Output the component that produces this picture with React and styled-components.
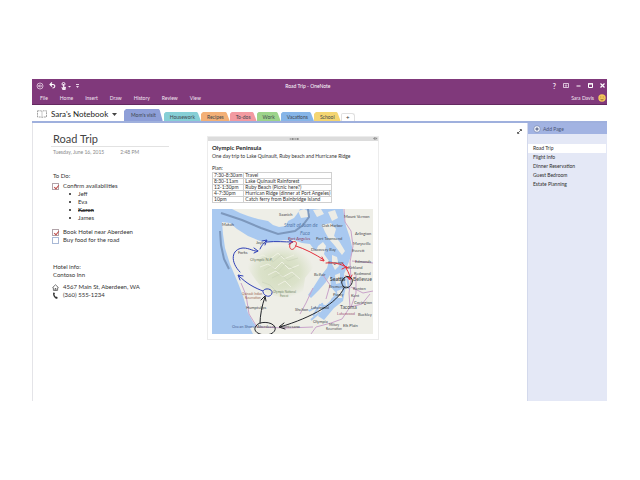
import React, { useState } from 'react';
import styled, { createGlobalStyle } from 'styled-components';

const GlobalStyle = createGlobalStyle`
  * {
    box-sizing: border-box;
  }
  body {
    margin: 0;
    background: #ffffff;
    font-family: Lato, "Open Sans", sans-serif;
    font-size: 6px;
    color: #333;
  }
  button, input {
    font: inherit;
    color: inherit;
    margin: 0;
    padding: 0;
    border: 0;
    background: none;
  }
  h1, h2, p, ul {
    margin: 0;
    padding: 0;
    font-weight: 400;
  }
  svg {
    display: block;
  }
`;

const Page = styled.div`
  display: flex;
  flex-direction: column;
  min-height: 100vh;
  padding: 79px 33px 79px 32px;
`;

const Window = styled.div`
  flex: 1;
  display: flex;
  flex-direction: column;
`;

const Ribbon = styled.header`
  background: #80397b;
  color: #f3e6f2;
  border-bottom: 1px solid #642960;
  font-size: 5px;
`;

const TitleRow = styled.div`
  display: flex;
  align-items: center;
  height: 13px;
  padding: 0 2px 0 4px;
`;

const IconGroup = styled.div`
  display: flex;
  align-items: center;
  gap: ${props => props.gap}px;
`;

const IconButton = styled.button`
  display: flex;
  align-items: center;
  justify-content: center;
  line-height: 8px;
  font-weight: 700;
  font-size: 7px;
`;

const WindowTitle = styled.div`
  flex: 1;
  padding-right: 16px;
  text-align: center;
  color: #ffffff;
`;

const MenuRow = styled.nav`
  display: flex;
  align-items: center;
  gap: 12px;
  height: 12px;
  padding: 0 1px 0 8px;
`;

const User = styled.button`
  display: flex;
  align-items: center;
  gap: 4px;
  margin-left: auto;
`;

const TabRow = styled.div`
  display: flex;
  align-items: flex-end;
  height: 18px;
  padding-left: 5px;
  border-bottom: 2px solid #9fb0dd;
`;

const NotebookButton = styled.button`
  display: flex;
  align-items: center;
  gap: 4px;
  width: 87px;
  height: 14px;
  font-size: 8px;
  color: #222;
`;

const Tab = styled.button`
  height: ${props => (props.$active ? 12 : 9)}px;
  padding: 0 ${props => (props.$active ? 7 : 6)}px;
  margin-right: ${props => (props.$active ? 1 : 0)}px;
  font-size: 5px;
  color: #40474f;
  background: ${props => props.$color};
  clip-path: polygon(0 100%, 0 2px, 2px 0, calc(100% - 4px) 0, calc(100% - 3px) 1px, 100% 100%);
`;

const AddTab = styled.button`
  width: 14px;
  height: 8px;
  font-size: 6px;
  line-height: 7px;
  border: 1px solid #e0e0e0;
  border-bottom: 0;
  border-radius: 2px 3px 0 0;
`;

const Body = styled.div`
  flex: 1;
  display: flex;
`;

const Canvas = styled.main`
  flex: 1;
  display: flex;
  align-items: flex-start;
  border-left: 1px solid #e4e4e8;
  padding-right: 5px;
`;

const Notes = styled.section`
  width: 118px;
  margin: 9px 38px 0 18px;
  line-height: 8px;
`;

const PageTitle = styled.h1`
  padding: 0 2px;
  font-size: 11px;
  line-height: 14px;
  color: #444;
  border-bottom: 1px solid #e2e2e2;
`;

const DateLine = styled.div`
  display: flex;
  gap: 16px;
  padding: 1px 2px 0;
  font-size: 5px;
  color: #8a8a8a;
`;

const Text = styled.p`
  padding-left: 2px;
  margin-top: ${props => props.$top || 0}px;
`;

const TodoItem = styled.label`
  display: flex;
  align-items: center;
  gap: 4px;
  height: 8px;
  padding-left: 1px;
  margin-top: ${props => props.$top || 0}px;
`;

const Checkbox = styled.input`
  appearance: none;
  position: relative;
  width: 7px;
  height: 7px;
  border: 1px solid #a9b9d6;
  background: #ffffff;
  &:checked {
    border-color: #b1a3a9;
  }
  &:checked::after {
    content: "";
    position: absolute;
    left: 2px;
    top: 0;
    width: 2px;
    height: 4px;
    border: solid #c0504d;
    border-width: 0 1px 1px 0;
    transform: rotate(40deg);
  }
`;

const Bullets = styled.ul`
  list-style: none;
  padding-left: 18px;
`;

const Bullet = styled.li`
  display: flex;
  align-items: center;
  gap: 7px;
  font-weight: ${props => (props.$done ? 700 : 400)};
  text-decoration: ${props => (props.$done ? 'line-through' : 'none')};
  &::before {
    content: "";
    width: 2px;
    height: 2px;
    border-radius: 1px;
    background: #222;
  }
`;

const InfoLine = styled.div`
  display: flex;
  align-items: center;
  gap: 4px;
  height: 8px;
  padding-left: 1px;
  margin-top: ${props => props.$top || 0}px;
`;

const Card = styled.section`
  flex: 0 1 172px;
  margin-top: 13px;
  border: 1px solid #ececec;
`;

const CardHandle = styled.div`
  display: flex;
  align-items: center;
  justify-content: center;
  height: 4px;
  background: #dcdcdc;
`;

const CardBody = styled.div`
  padding: 3px 5px 5px 4px;
  font-size: 5px;
  line-height: 8px;
`;

const CardTitle = styled.h2`
  font-size: 6px;
  font-weight: 700;
  color: #1c1c1c;
`;

const Plan = styled.table`
  width: 118px;
  margin-bottom: 6px;
  border-collapse: collapse;
  white-space: nowrap;
  caption {
    padding-top: 5px;
    line-height: 7px;
    text-align: left;
  }
  td {
    height: 6px;
    padding: 0 1px;
    line-height: 5px;
    border: 1px solid #d0d0d0;
  }
  td:first-child {
    width: 29px;
  }
`;

const Expand = styled.button`
  margin: 6px 0 0 auto;
`;

const Sidebar = styled.aside`
  width: 80px;
  background: #e4e8f6;
  border-left: 1px solid #d3d9ec;
`;

const AddPage = styled.button`
  display: flex;
  align-items: center;
  gap: 2px;
  width: 100%;
  height: 11px;
  padding-left: 5px;
  font-size: 5px;
  color: #4b5677;
  background: #a2b3e2;
`;

const PageList = styled.nav`
  display: flex;
  flex-direction: column;
  padding: 10px 1px 0 0;
`;

const PageLink = styled.a`
  height: 9px;
  padding-left: 5px;
  font-size: 5px;
  line-height: 9px;
  color: #2d2d2d;
  text-decoration: none;
  background: ${props => (props.$active ? '#ffffff' : 'none')};
`;

const tabs = [
  { name: "Mom's visit", color: '#8e9fd8' },
  { name: 'Housework', color: '#86cfd6' },
  { name: 'Recipes', color: '#f3b077' },
  { name: 'To-dos', color: '#f39aa1' },
  { name: 'Work', color: '#9dd48b' },
  { name: 'Vacations', color: '#86b5e8' },
  { name: 'School', color: '#f4d572' },
];

const pages = ['Road Trip', 'Flight Info', 'Dinner Reservation', 'Guest Bedroom', 'Estate Planning'];

const plan = [
  ['7:30-8:30am', 'Travel'],
  ['8:30-11am', 'Lake Quinault Rainforest'],
  ['12-1:30pm', 'Ruby Beach (Picnic here?)'],
  ['4-7:30pm', 'Hurrican Ridge (dinner at Port Angeles)'],
  ['10pm', 'Catch ferry from Bainbridge Island'],
];

const places = [
  [10, 17, 'Makah'], [67, 7, 'Saanich'], [26, 45, 'Forks'], [44, 35, 'Joyce'],
  [132, 9, 'Mount Vernon'], [143, 26, 'Arlington'], [141, 36, 'Marysville'],
  [110, 18, 'Oak Harbor'], [104, 31, 'Port Townsend'], [99, 42, 'Discovery Bay'],
  [140, 43, 'Everett'], [143, 54, 'Edmonds'], [116, 55, 'Kingston'],
  [136, 60, 'Kirkland'], [142, 66, 'Redmond'], [102, 67, 'Belfair'],
  [141, 81, 'Renton'], [139, 88, 'Kent'], [142, 95, 'Covington'],
  [117, 79, 'Bremerton'], [121, 87, 'Purdy'], [83, 102, 'Shelton'],
  [99, 100, 'Lakewood'], [101, 114, 'Olympia'], [146, 107, 'Buckley'],
  [34, 100, 'Humptulips'], [68, 119, 'Montesano'],
];

const MapView = () => (
  <svg viewBox="0 0 161 125" width="100%" role="img" aria-label="Map of the Olympic Peninsula">
    <defs>
      <radialGradient id="forest">
        <stop offset="0" stopColor="#d3dcbe" />
        <stop offset="0.6" stopColor="#dbe2ca" />
        <stop offset="1" stopColor="#eeeee7" />
      </radialGradient>
    </defs>
    <rect width="161" height="125" fill="#a9c9f0" />
    {/* mainland and the peninsula */}
    <path
      d="M10 13 L18 14 L25 20 L36 27 L48 32 L60 33 L72 31 L82 31 L90 34 L98 35 L101 39 L104 42 L106 37 L111 33 L114 37 L112 45 L117 52 L115 59 L108 68 L101 79 L96 86 L99 89 L107 81 L114 73 L118 66 L119 78 L124 84 L119 91 L112 98 L106 107 L112 111 L122 99 L131 92 L134 77 L132 65 L136 55 L141 42 L138 29 L134 17 L131 0 L161 0 L161 125 L41 125 L38 119 L44 117 L41 113 L36 104 L31 87 L26 74 L18 55 L13 39 L11 25 Z"
      fill="#eeeee7"
    />
    <path d="M36 44 L56 37 L80 36 L99 44 L102 62 L92 82 L73 90 L54 84 L43 70 L35 58 Z" fill="url(#forest)" />
    <g fill="none" stroke="#eef0e2" strokeWidth="1">
      <path d="M42 50 L51 46 L58 50 L66 44 L72 50 L82 46 M48 58 L56 55 L63 60 L70 53 L77 60 L87 56 M56 66 L64 62 L71 68 L80 63 L88 70 M66 76 L73 72 L79 78" />
    </g>
    <g fill="none" stroke="#c9d2b8" strokeWidth="0.6">
      <path d="M46 52 L54 48 L61 53 L69 46 L76 52 L86 49 M52 61 L59 57 L66 63 L73 55 L82 60 M60 69 L68 65 L75 71 L83 66 M50 73 L58 76 L65 83" />
    </g>
    {/* Vancouver Island */}
    <path d="M20 0 L28 4 L36 7 L46 10 L56 12 L61 16 L67 18 L74 17 L76 12 L82 9 L85 5 L88 0 Z" fill="#eeeee7" />
    {/* islands of the sound */}
    <g fill="#ecece6">
      <path d="M86 2 L92 0 L98 3 L96 8 L89 9 Z M101 1 L109 0 L112 5 L105 8 Z M116 3 L123 1 L126 9 L120 12 Z" />
      <path d="M110 16 L119 14 L124 20 L122 27 L127 32 L133 42 L130 46 L123 37 L117 30 L113 23 Z" />
      <path d="M120 46 L125 48 L127 57 L123 61 L120 55 Z M123 66 L128 64 L128 74 L124 75 Z M125 82 L130 80 L130 89 L126 89 Z" />
    </g>
    <g fill="none" stroke="#a9c9f0" strokeWidth="2">
      <path d="M101 107 L108 96 L117 98 L121 89 M99 111 L107 104 L115 105 M104 98 L97 102 M110 94 L112 108 M135 67 L137 80" />
    </g>
    <path d="M93 69 L101 59 L104 61 L96 76 L91 84 Z" fill="#eeeee7" />
    {/* borders at sea */}
    <path d="M9 4 L30 11 L49 19 L66 25 L83 22 L91 16 L97 8 L96 0" fill="none" stroke="#7d98bd" strokeWidth="2" />
    <path d="M8 22 L9 36 L12 50 L17 60" fill="none" stroke="#7d98bd" strokeWidth="2" />
    {/* highways */}
    <g fill="none" stroke="#c9a3ca" strokeWidth="1">
      <path d="M132 0 L133 13 L139 22 L141 37 L138 53 L139 70 L137 84 L138 98 L130 110 L119 114 L104 118 L99 125" />
      <path d="M29 74 L34 86 L37 105 L45 118 L75 119 L101 118 M101 79 L94 94 L88 105 M144 66 L144 84 L139 98" />
      <path d="M140 52 L161 54 M139 78 L151 84 L161 82 M138 98 L150 95 L158 85 M111 66 L118 76 L114 90" />
    </g>
    <g fill="#47494d" fontSize="4">
      {places.map(([x, y, name]) => (
        <text key={name} x={x} y={y}>{name}</text>
      ))}
      <text x="38" y="52" fill="#76806a">Olympic N.P.</text>
      <text x="30" y="86" fontSize="3" fill="#9a654f">Quinault Indian</text>
      <text x="33" y="90" fontSize="3" fill="#9a654f">Reservation</text>
      <text x="61" y="84" fontSize="3" fill="#708466">Olympic National</text>
      <text x="68" y="88" fontSize="3" fill="#708466">Forest</text>
      <text x="20" y="119" fill="#4a6393">Ocean Shores</text>
      <text x="45" y="119">Aberdeen</text>
      <text x="117" y="117" fontSize="3">Military</text>
      <text x="114" y="121" fontSize="3">Reservation</text>
      <text x="131" y="118">Elk Plain</text>
      <text x="128" y="100" fontSize="5">Tacoma</text>
      <text x="125" y="106" fill="#a35b78">Lakewood</text>
      <text x="118" y="72" fontSize="5" fontWeight="700">Seattle</text>
      <text x="141" y="72" fontSize="5">Bellevue</text>
      <text x="72" y="18" fontSize="5" fontStyle="italic" fill="#5478aa">Strait of Juan de</text>
      <text x="88" y="26" fontSize="5" fontStyle="italic" fill="#5478aa">Fuca</text>
      <text x="76" y="31" fill="#8f3555">Port Angeles</text>
    </g>
    {/* ink of the route */}
    <g fill="none" stroke="#2e3fb6" strokeWidth="1" strokeLinecap="round">
      <path d="M51 82 C53 78 61 80 60 84 C59 89 52 88 51 83 M51 82 C43 79 35 75 27 67 M28 71 L26 66 L31 67" />
      <path d="M28 63 C18 53 19 40 31 39 C38 39 42 43 46 42 M42 39 L46 42 L42 44 M48 40 C49 37 52 34 54 32 M50 32 L55 31 L53 36" />
      <path d="M55 33 C64 32 73 33 80 33 M77 31 L81 33 L77 35" />
    </g>
    <g fill="none" stroke="#e32f3c" strokeWidth="1" strokeLinecap="round">
      <path d="M78 35 C81 31 86 32 84 36 C82 43 76 41 78 35 M84 37 C93 40 103 45 112 51 M108 51 L112 52 L110 48" />
      <path d="M114 54 C122 53 129 55 134 58 M130 54 L134 58 L130 60 M134 59 C137 64 138 67 138 69 M134 67 L138 70 L140 66" />
    </g>
    <path d="M134 57 L137 59 L134 60 Z M135 67 L140 70 L137 71 Z" fill="#e32f3c" />
    <g fill="none" stroke="#22252a" strokeWidth="1" strokeLinecap="round">
      <path d="M44 117 C46 112 60 112 63 118 C65 124 55 128 48 125 C42 123 42 119 44 117 M48 114 C48 107 50 96 53 88 M49 91 L53 87 L54 92" />
      <path d="M130 72 C131 67 138 66 140 70 C142 76 134 82 131 77 C130 75 129 73 130 72 M132 79 C125 94 101 108 68 118 M72 114 L67 118 L73 120" />
    </g>
  </svg>
);

const App = () => {
  const [activeTab, setActiveTab] = useState("Mom's visit");
  const [activePage, setActivePage] = useState('Road Trip');

  return (
    <Page>
      <GlobalStyle />
      <Window>
        <Ribbon>
          <TitleRow>
            <IconGroup gap={5}>
              <IconButton aria-label="Back">
                <svg width="8" height="8" viewBox="0 0 8 8" fill="none" stroke="#e8d3e6">
                  <circle cx="4" cy="4" r="3" strokeWidth="0.8" />
                  <path d="M6 4 H2.5 M4 2.5 L2.5 4 L4 5.5" />
                </svg>
              </IconButton>
              <IconButton aria-label="Undo">
                <svg width="7" height="7" viewBox="0 0 7 7" fill="none" stroke="#fff">
                  <path d="M3 0.5 L1 2.5 L3 4.5 M1 2.5 H4 C6.6 2.5 6.4 6 3.5 6" strokeWidth="1.1" />
                </svg>
              </IconButton>
              <IconButton aria-label="Touch mode">
                <svg width="10" height="8" viewBox="0 0 10 8" fill="#f3e6f2">
                  <circle cx="2.5" cy="2" r="1.5" fill="none" stroke="#f3e6f2" />
                  <path d="M2 2 H3 V4.5 L5 5 L4.5 8 H1.5 L0.3 5 L2 5.5 Z M7 4 H10 L8.5 5.5 Z" />
                </svg>
              </IconButton>
              <IconButton aria-label="Customize toolbar">
                <svg width="3" height="4" viewBox="0 0 3 4" fill="#e8d3e6">
                  <path d="M0 0 H3 V1 H0 Z M0 2 H3 L1.5 4 Z" />
                </svg>
              </IconButton>
            </IconGroup>
            <WindowTitle>Road Trip - OneNote</WindowTitle>
            <IconGroup gap={7}>
              <IconButton aria-label="Help">?</IconButton>
              <IconButton aria-label="Ribbon options">
                <svg width="6" height="5" viewBox="0 0 6 5" fill="none" stroke="#f3e6f2" strokeWidth="0.8">
                  <path d="M0.5 0.5 H5.5 V4.5 H0.5 Z M3 4 V2 M2 2.7 L3 1.7 L4 2.7" />
                </svg>
              </IconButton>
              <IconButton aria-label="Minimize">
                <svg width="5" height="5" viewBox="0 0 5 5" stroke="#fff"><path d="M0.5 3 H4.5" /></svg>
              </IconButton>
              <IconButton aria-label="Maximize">
                <svg width="5" height="5" viewBox="0 0 5 5" fill="none" stroke="#fff">
                  <path d="M0.5 1 H4.5 V4.5 H0.5 Z M0 0.7 H5" />
                </svg>
              </IconButton>
              <IconButton aria-label="Close">
                <svg width="5" height="5" viewBox="0 0 5 5" stroke="#fff" strokeWidth="1.2">
                  <path d="M0.5 0.5 L4.5 4.5 M4.5 0.5 L0.5 4.5" />
                </svg>
              </IconButton>
            </IconGroup>
          </TitleRow>
          <MenuRow>
            {['File', 'Home', 'Insert', 'Draw', 'History', 'Review', 'View'].map((item) => (
              <button key={item}>{item}</button>
            ))}
            <User>
              Sara Davis
              <svg width="8" height="8" viewBox="0 0 8 8">
                <circle cx="4" cy="4" r="3.7" fill="#f3c65b" />
                <path d="M2.4 3 H3.2 M4.8 3 H5.6 M2.2 4.8 C3 6.3 5 6.3 5.8 4.8" fill="none" stroke="#8a5a2b" strokeWidth="0.8" />
              </svg>
            </User>
          </MenuRow>
        </Ribbon>

        <TabRow>
          <NotebookButton>
            <svg width="10" height="8" viewBox="0 0 10 8" fill="none" stroke="#8a8a8a" strokeWidth="0.8">
              <path d="M0.5 0.8 H4 L5 1.4 L6 0.8 H9.5 V7 H6 L5 7.5 L4 7 H0.5 Z" strokeDasharray="2 0.7" />
              <path d="M5 1.4 V7" stroke="#bbb" />
            </svg>
            Sara's Notebook
            <svg width="5" height="3" viewBox="0 0 5 3" fill="#444"><path d="M0 0 H5 L2.5 3 Z" /></svg>
          </NotebookButton>
          {tabs.map((tab) => (
            <Tab
              key={tab.name}
              $color={tab.color}
              $active={tab.name === activeTab}
              onClick={() => setActiveTab(tab.name)}
            >
              {tab.name}
            </Tab>
          ))}
          <AddTab aria-label="Add section">+</AddTab>
        </TabRow>

        <Body>
          <Canvas>
            <Notes>
              <PageTitle>Road Trip</PageTitle>
              <DateLine>
                <span>Tuesday, June 16, 2015</span>
                <span>2:48 PM</span>
              </DateLine>
              <Text $top={16}>To Do:</Text>
              <TodoItem $top={2}>
                <Checkbox type="checkbox" defaultChecked />
                Confirm availabilities
              </TodoItem>
              <Bullets>
                <Bullet>Jeff</Bullet>
                <Bullet>Eva</Bullet>
                <Bullet $done>Karen</Bullet>
                <Bullet>James</Bullet>
              </Bullets>
              <TodoItem $top={6}>
                <Checkbox type="checkbox" defaultChecked />
                Book Hotel near Aberdeen
              </TodoItem>
              <TodoItem>
                <Checkbox type="checkbox" />
                Buy food for the road
              </TodoItem>
              <Text $top={19}>Hotel info:</Text>
              <Text>Contoso Inn</Text>
              <InfoLine $top={4}>
                <svg width="7" height="7" viewBox="0 0 7 7" fill="none" stroke="#555" strokeWidth="0.8">
                  <path d="M0.3 3.8 L3.5 0.8 L6.7 3.8 M1.4 3.5 V6.4 H5.6 V3.5 M3 6.4 V4.5 H4 V6.4" />
                </svg>
                4567 Main St, Aberdeen, WA
              </InfoLine>
              <InfoLine>
                <svg width="7" height="7" viewBox="0 0 7 7" fill="#333">
                  <path d="M2 0.3 L3 1.8 L2.4 2.6 C2.7 3.7 3.3 4.4 4 4.9 L4.9 4.6 L5.8 6 L5 6.8 C2.5 6.4 0.8 3.6 1.1 0.9 Z" />
                </svg>
                (360) 555-1234
              </InfoLine>
            </Notes>

            <Card>
              <CardHandle>
                <svg width="100%" height="4">
                  <g fill="#8c8c8c">
                    <svg x="48%" width="10" height="4">
                      <path d="M0 1 H1 V3 H0 Z M2 1 H4 V3 H2 Z M5 1 H6 V3 H5 Z M7 1 H9 V3 H7 Z" />
                    </svg>
                    <svg x="97%" width="5" height="4">
                      <path d="M2 0 V3 L0 1.5 Z M2.5 0 L4.5 1.5 L2.5 3 Z" />
                    </svg>
                  </g>
                </svg>
              </CardHandle>
              <CardBody>
                <CardTitle>Olympic Peninsula</CardTitle>
                <p>One day trip to Lake Quinault, Ruby beach and Hurricane Ridge</p>
                <Plan>
                  <caption>Plan:</caption>
                  <tbody>
                    {plan.map(([time, stop]) => (
                      <tr key={time}>
                        <td>{time}</td>
                        <td>{stop}</td>
                      </tr>
                    ))}
                  </tbody>
                </Plan>
                <MapView />
              </CardBody>
            </Card>

            <Expand aria-label="Full page view">
              <svg width="5" height="5" viewBox="0 0 5 5" fill="#555" stroke="#555" strokeWidth="0.8">
                <path d="M1 4 L4 1 M3 0.5 H4.5 V2 Z M0.5 3 V4.5 H2 Z" />
              </svg>
            </Expand>
          </Canvas>

          <Sidebar>
            <AddPage>
              <svg width="8" height="8" viewBox="0 0 8 8">
                <circle cx="4" cy="4" r="3.3" fill="#f5f7fd" stroke="#7383ad" strokeWidth="0.7" />
                <path d="M4 2.3 V5.7 M2.3 4 H5.7" stroke="#44527a" />
              </svg>
              Add Page
            </AddPage>
            <PageList>
              {pages.map((name) => (
                <PageLink
                  key={name}
                  href="#"
                  $active={name === activePage}
                  onClick={() => setActivePage(name)}
                >
                  {name}
                </PageLink>
              ))}
            </PageList>
          </Sidebar>
        </Body>
      </Window>
    </Page>
  );
};

export default App;
